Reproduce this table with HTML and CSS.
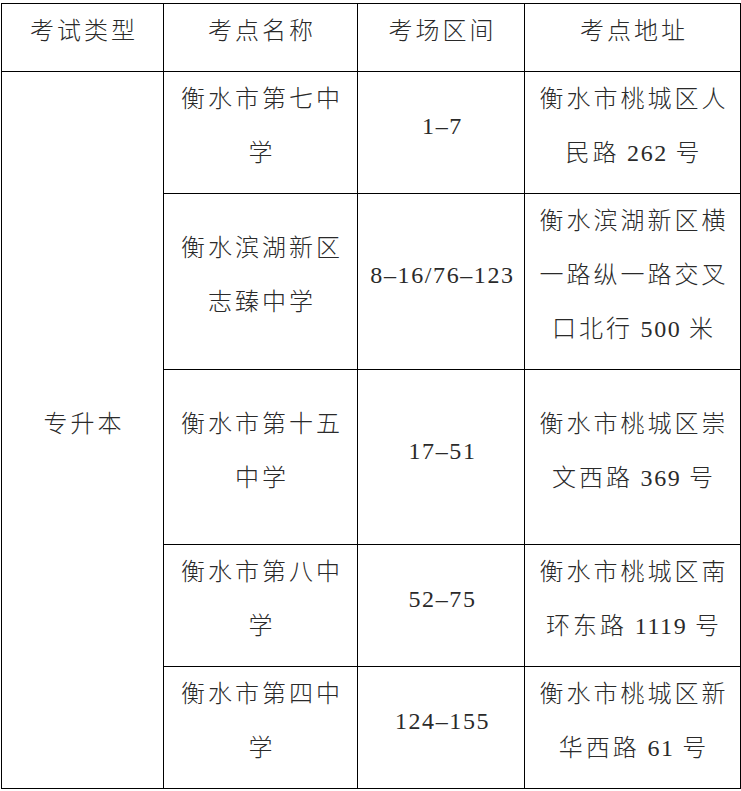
FILE: index.html
```html
<!DOCTYPE html>
<html lang="zh-CN">
<head>
<meta charset="utf-8">
<title>考点安排</title>
<link rel="stylesheet" href="styles.css">
</head>
<body>
<div class="wrap">
<table class="exam">
  <colgroup>
    <col class="c1"><col class="c2"><col class="c3"><col class="c4">
  </colgroup>
  <tr class="r-head">
    <td>考试类型</td>
    <td>考点名称</td>
    <td>考场区间</td>
    <td>考点地址</td>
  </tr>
  <tr class="r-short">
    <td rowspan="5">专升本</td>
    <td>衡水市第七中<br>学</td>
    <td><span class="num">1–7</span></td>
    <td>衡水市桃城区人<br>民路<span class="num"> 262 </span>号</td>
  </tr>
  <tr class="r-tall">
    <td>衡水滨湖新区<br>志臻中学</td>
    <td><span class="num">8–16/76–123</span></td>
    <td>衡水滨湖新区横<br>一路纵一路交叉<br>口北行<span class="num"> 500 </span>米</td>
  </tr>
  <tr class="r-tall">
    <td>衡水市第十五<br>中学</td>
    <td><span class="num">17–51</span></td>
    <td>衡水市桃城区崇<br>文西路<span class="num"> 369 </span>号</td>
  </tr>
  <tr class="r-short">
    <td>衡水市第八中<br>学</td>
    <td><span class="num">52–75</span></td>
    <td>衡水市桃城区南<br>环东路<span class="num"> 1119 </span>号</td>
  </tr>
  <tr class="r-short">
    <td>衡水市第四中<br>学</td>
    <td><span class="num">124–155</span></td>
    <td>衡水市桃城区新<br>华西路<span class="num"> 61 </span>号</td>
  </tr>
</table>
</div>
</body>
</html>
```
FILE: styles.css
```css
html, body {
  margin: 0;
  padding: 0;
  background: #ffffff;
}

.wrap {
  padding: 3px 0 0 1px;
}

.exam {
  border-collapse: collapse;
  table-layout: fixed;
  width: 739px;
  font-family: "Liberation Serif", "Noto Sans CJK SC", serif;
  font-size: 24px;
  font-weight: 300;
  color: #2a2a2a;
}

.c1 { width: 162px; }
.c2 { width: 194px; }
.c3 { width: 167px; }
.c4 { width: 216px; }

.exam td {
  border: 1px solid #000000;
  text-align: center;
  vertical-align: middle;
  line-height: 54px;
  letter-spacing: 3px;
  padding: 0 0 13px 3px;
  white-space: nowrap;
}

.r-head td { height: 53px; }
.r-short td { height: 107px; }
.r-tall td { height: 161px; }

.num {
  letter-spacing: 1.6px;
}
```
